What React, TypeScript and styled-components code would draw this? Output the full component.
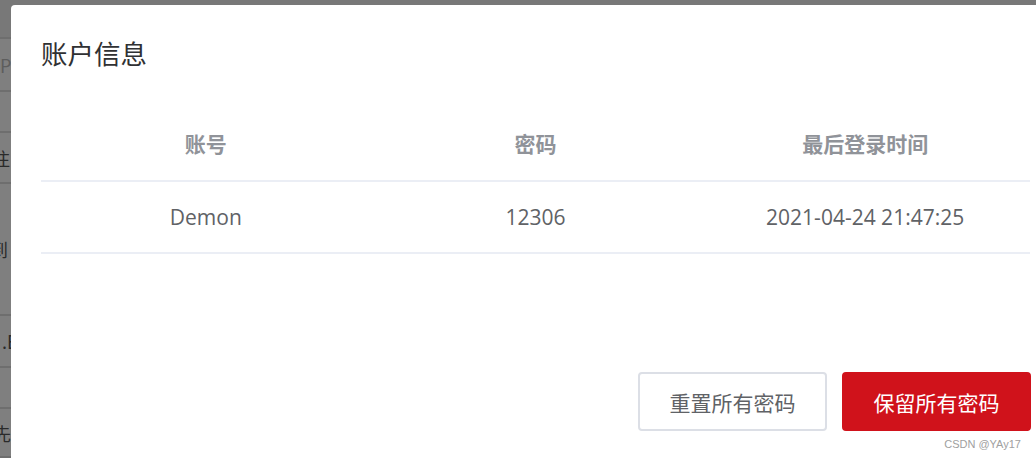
import React from "react";
import styled, { createGlobalStyle } from "styled-components";

const GlobalStyle = createGlobalStyle`
  html, body {
    margin: 0;
    padding: 0;
    width: 1036px;
    height: 458px;
    overflow: hidden;
    background: #ffffff;
    font-family: "Noto Sans CJK SC", "Noto Sans", sans-serif;
  }
`;

// rows of the page that sits behind the dialog; only their left edge shows
const backRows = [
  { height: 39, text: "", shift: 0, color: "#f0f0f0" },
  { height: 53, text: "P", shift: 0, color: "#fff" },
  { height: 41, text: "", shift: 0, color: "#fff" },
  { height: 51, text: "注", shift: -8, color: "#fff" },
  { height: 132, text: "到", shift: -10, color: "#fff" },
  { height: 52, text: ".E", shift: 2, color: "#fff" },
  { height: 41, text: "", shift: 0, color: "#fff" },
  { height: 49, text: "先", shift: -7, color: "#fff" },
];

const accounts = [
  { name: "Demon", password: "12306", lastLogin: "2021-04-24 21:47:25" },
];

const App = () => {
  return (
    <>
      <GlobalStyle />
      <Page>
        {backRows.map((row, i) => (
          <BackRow key={i} $height={row.height} $bg={row.color}>
            <BackText $shift={row.shift} $light={row.text === "P"}>
              {row.text}
            </BackText>
          </BackRow>
        ))}
      </Page>
      <Overlay />
      <Dialog>
        <Title>账户信息</Title>
        <Table>
          <thead>
            <tr>
              <Th>账号</Th>
              <Th>密码</Th>
              <Th>最后登录时间</Th>
            </tr>
          </thead>
          <tbody>
            {accounts.map((a) => (
              <tr key={a.name}>
                <Td>{a.name}</Td>
                <Td>{a.password}</Td>
                <Td>{a.lastLogin}</Td>
              </tr>
            ))}
          </tbody>
        </Table>
        <Footer>
          <Button>重置所有密码</Button>
          <Button $primary>保留所有密码</Button>
        </Footer>
      </Dialog>
      <Watermark>CSDN @YAy17</Watermark>
    </>
  );
};

export default App;

const Page = styled.div`
  display: flex;
  flex-direction: column;
  width: 1036px;
  height: 458px;
  overflow: hidden;
`;

const BackRow = styled.div<{ $height: number; $bg: string }>`
  display: flex;
  align-items: center;
  flex-shrink: 0;
  height: ${(p) => p.$height - 2}px;
  border-bottom: 2px solid #dcdcdc;
  background: ${(p) => p.$bg};
  overflow: hidden;
`;

const BackText = styled.span<{ $shift: number; $light: boolean }>`
  margin-left: ${(p) => p.$shift}px;
  font-size: 18px;
  white-space: nowrap;
  color: ${(p) => (p.$light ? "#bbbbbb" : "#555555")};
`;

const Overlay = styled.div`
  position: fixed;
  inset: 0;
  background: rgba(0, 0, 0, 0.5);
`;

const Dialog = styled.div`
  position: absolute;
  top: 5px;
  left: 11px;
  width: 1050px;
  height: 453px;
  box-sizing: border-box;
  padding: 30px 30px 0;
  background: #ffffff;
  border-radius: 4px 4px 0 0;
  overflow: hidden;
`;

const Title = styled.div`
  font-size: 26.5px;
  line-height: 36px;
  color: #303133;
  font-weight: 400;
`;

const Table = styled.table`
  margin-top: 38px;
  width: 989px;
  border-collapse: collapse;
  table-layout: fixed;
`;

const Th = styled.th`
  height: 67px;
  padding: 0 0 4px;
  font-size: 21px;
  font-weight: 700;
  color: #909399;
  text-align: center;
  border-bottom: 2px solid #ebeef5;
`;

const Td = styled.td`
  height: 70px;
  padding: 0;
  font-family: "Open Sans", "Noto Sans CJK SC", sans-serif;
  font-size: 21px;
  color: #606266;
  text-align: center;
  border-bottom: 2px solid #ebeef5;
`;

const Footer = styled.div`
  display: flex;
  justify-content: flex-end;
  gap: 15px;
  margin-top: 118px;
`;

const Button = styled.button<{ $primary?: boolean }>`
  width: 189px;
  height: 59px;
  box-sizing: border-box;
  border-radius: 4px;
  border: 2px solid ${(p) => (p.$primary ? "#d0121b" : "#dcdfe6")};
  background: ${(p) => (p.$primary ? "#d0121b" : "#ffffff")};
  color: ${(p) => (p.$primary ? "#ffffff" : "#606266")};
  font-family: "Noto Sans CJK SC", sans-serif;
  font-size: 21px;
  padding: 0;
  cursor: pointer;
`;

const Watermark = styled.div`
  position: absolute;
  right: 15px;
  bottom: 8px;
  font-family: "Liberation Sans", sans-serif;
  font-size: 11px;
  color: #a0a0a0;
`;
